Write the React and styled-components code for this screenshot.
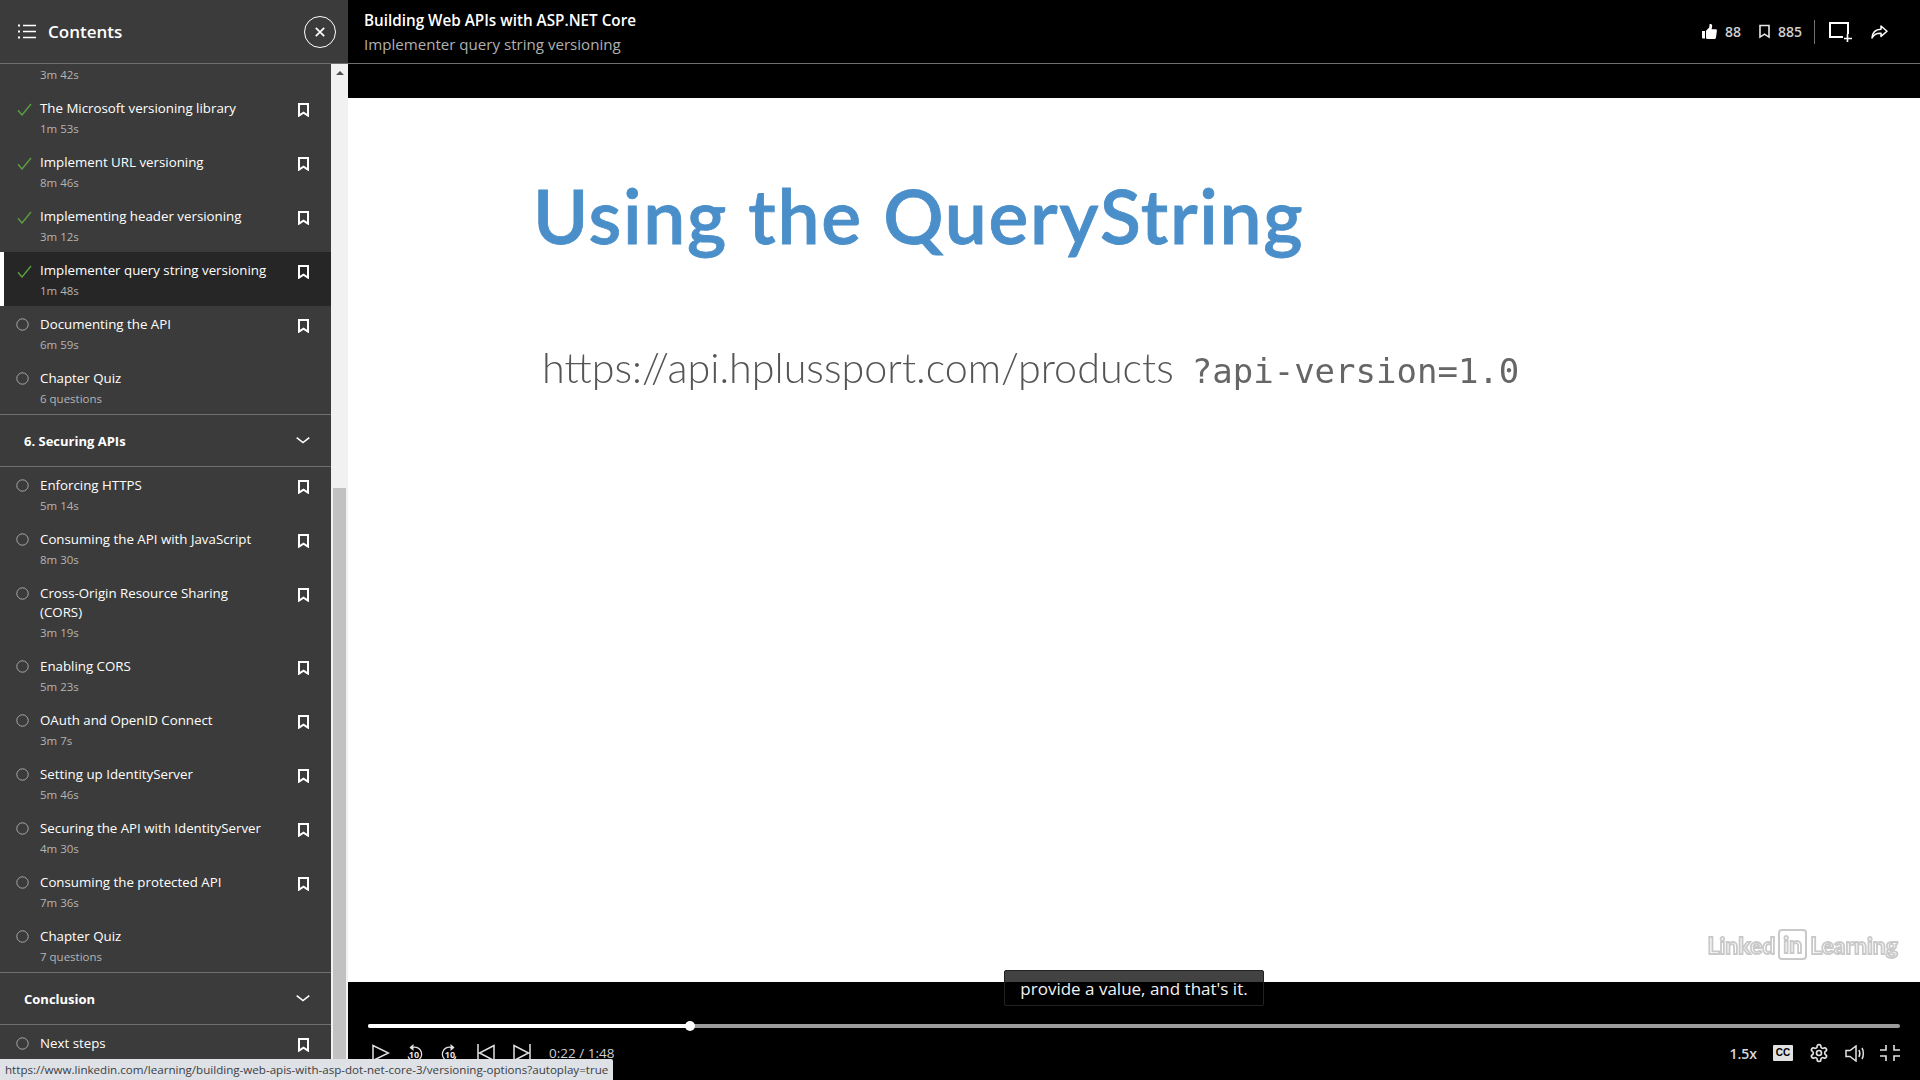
import React from 'react';
import styled, { createGlobalStyle } from 'styled-components';

const GlobalStyle = createGlobalStyle`
  html, body {
    margin: 0;
    padding: 0;
    height: 100%;
    overflow: hidden;
    background: #000;
    font-family: "Open Sans", "Noto Sans", "Liberation Sans", sans-serif;
  }
  * { box-sizing: border-box; }
`;

const topItems = [
  { title: 'The Microsoft versioning library', time: '1m 53s', done: true, mark: true },
  { title: 'Implement URL versioning', time: '8m 46s', done: true, mark: true },
  { title: 'Implementing header versioning', time: '3m 12s', done: true, mark: true },
  { title: 'Implementer query string versioning', time: '1m 48s', done: true, mark: true, active: true },
  { title: 'Documenting the API', time: '6m 59s', mark: true },
  { title: 'Chapter Quiz', time: '6 questions' },
];

const securingItems = [
  { title: 'Enforcing HTTPS', time: '5m 14s', mark: true },
  { title: 'Consuming the API with JavaScript', time: '8m 30s', mark: true },
  { title: 'Cross-Origin Resource Sharing (CORS)', time: '3m 19s', mark: true },
  { title: 'Enabling CORS', time: '5m 23s', mark: true },
  { title: 'OAuth and OpenID Connect', time: '3m 7s', mark: true },
  { title: 'Setting up IdentityServer', time: '5m 46s', mark: true },
  { title: 'Securing the API with IdentityServer', time: '4m 30s', mark: true },
  { title: 'Consuming the protected API', time: '7m 36s', mark: true },
  { title: 'Chapter Quiz', time: '7 questions' },
];

const BookmarkIcon = ({ w = 11, h = 14, color = '#fff', sw = 2 }) => (
  <svg width={w} height={h} viewBox="0 0 11 14" fill="none">
    <path d="M1 1h9v11.6L5.5 9.6 1 12.6z" stroke={color} strokeWidth={sw} />
  </svg>
);

const Chevron = () => (
  <svg width="14" height="7" viewBox="0 0 14 7" fill="none">
    <path d="M.7.7 7 5.6 13.3.7" stroke="#fff" strokeWidth="1.6" />
  </svg>
);

const StatusIcon = ({ done }) =>
  done ? (
    <svg width="15" height="13" viewBox="0 0 15 13" fill="none">
      <path d="M1 7.2 5 12 14 1" stroke="#5b9f40" strokeWidth="1.4" />
    </svg>
  ) : (
    <svg width="13" height="13" viewBox="0 0 13 13" fill="none">
      <circle cx="6.5" cy="6.5" r="5.7" stroke="#a8a8a8" strokeWidth="1" />
    </svg>
  );

function Lesson({ title, time, done, mark, active }) {
  return (
    <Row $active={active}>
      <StatusSlot $done={done}><StatusIcon done={done} /></StatusSlot>
      <RowText>
        <RowTitle>{title}</RowTitle>
        {time && <RowTime>{time}</RowTime>}
      </RowText>
      {mark && <MarkSlot><BookmarkIcon /></MarkSlot>}
    </Row>
  );
}

function Sidebar() {
  return (
    <Side>
      <SideHeader>
        <svg width="18" height="15" viewBox="0 0 18 15" fill="none">
          <path d="M5 1.5h13M5 7.5h13M5 13.5h13" stroke="#fff" strokeWidth="1.6" />
          <path d="M0 1.5h2M0 7.5h2M0 13.5h2" stroke="#fff" strokeWidth="2" />
        </svg>
        <SideTitle>Contents</SideTitle>
        <CloseButton>
          <svg width="10" height="10" viewBox="0 0 10 10" fill="none">
            <path d="M.8.8l8.4 8.4M9.2.8.8 9.2" stroke="#fff" strokeWidth="1.7" />
          </svg>
        </CloseButton>
      </SideHeader>
      <SideBody>
        <List>
          <ClippedTime>3m 42s</ClippedTime>
          {topItems.map((item) => <Lesson key={item.title} {...item} />)}
          <Section>6. Securing APIs<Chevron /></Section>
          {securingItems.map((item) => <Lesson key={item.title} {...item} />)}
          <Section>Conclusion<Chevron /></Section>
          <Lesson title="Next steps" mark />
        </List>
        <Scrollbar>
          <ScrollArrow />
          <ScrollThumb />
        </Scrollbar>
      </SideBody>
    </Side>
  );
}

function TopBar() {
  return (
    <Top>
      <TopTitles>
        <CourseTitle>Building Web APIs with ASP.NET Core</CourseTitle>
        <LessonTitle>Implementer query string versioning</LessonTitle>
      </TopTitles>
      <TopActions>
        <svg width="15" height="15" viewBox="0 0 15 15" fill="#fff">
          <path d="M0 7h3v7.5H1a1 1 0 0 1-1-1zM4 6.8 7.2 3.6 7.6 0h1.2c1 0 1.4 1 1.4 2L9.6 5.2h4c.9 0 1.4.7 1.3 1.5l-.9 6.8c-.1.8-.7 1.5-1.6 1.5H6.5C5.2 15 4 14.6 4 14.2z" />
        </svg>
        <Count>88</Count>
        <BookmarkSpacer><BookmarkIcon w={11} h={15} color="#e8e8e8" sw={1.6} /></BookmarkSpacer>
        <Count>885</Count>
        <Divider />
        <svg width="23" height="20" viewBox="0 0 23 20" fill="none">
          <path d="M14 15H1V1h18v11" stroke="#fff" strokeWidth="2" />
          <path d="M18.5 12v8M15 16.5h8" stroke="#fff" strokeWidth="1.6" />
        </svg>
        <ShareSpacer>
          <svg width="17" height="14" viewBox="0 0 17 14" fill="none">
            <path d="M10 1l6 5.2-6 5.2V8.2C6 8 3 9 1 13 1.300 7.500 5 4.400 10 4.200z" stroke="#fff" strokeWidth="1.5" strokeLinejoin="round" />
          </svg>
        </ShareSpacer>
      </TopActions>
    </Top>
  );
}

const ReplayIcon = ({ flip }) => (
  <ReplayWrap>
    <svg width="18" height="18" viewBox="0 0 18 18" fill="none">
      <g transform={flip ? 'translate(18 0) scale(-1 1)' : undefined}>
        <path d="M3 12.500A7 7 0 1 0 7.500 3.500H5.500" stroke="#e2e2e2" strokeWidth="1.300" />
        <path d="M8.500 0 4.500 3.500 8.500 7z" fill="#e2e2e2" />
      </g>
    </svg>
    <ReplayText>10</ReplayText>
  </ReplayWrap>
);

function Controls() {
  return (
    <Bottom>
      <Slider>
        <SliderFill />
        <SliderThumb />
      </Slider>
      <ControlRow>
        <ControlGroup>
          <PlayIcon width="18" height="18" viewBox="0 0 18 18" fill="none">
            <path d="M1 1.500v15L16.500 9z" stroke="#e2e2e2" strokeWidth="1.500" />
          </PlayIcon>
          <ReplayIcon />
          <ReplayIcon flip />
          <svg width="18" height="18" viewBox="0 0 18 18" fill="none">
            <path d="M1 0v18M17 1.500v15L2.500 9z" stroke="#e2e2e2" strokeWidth="1.500" />
          </svg>
          <svg width="18" height="18" viewBox="0 0 18 18" fill="none">
            <path d="M17 0v18M1 1.500v15L15.500 9z" stroke="#e2e2e2" strokeWidth="1.500" />
          </svg>
          <TimeText>0:22 / 1:48</TimeText>
        </ControlGroup>
        <ControlGroup $right>
          <Speed>1.5x</Speed>
          <CcBadge>CC</CcBadge>
          <svg width="20" height="20" viewBox="0 0 24 24" fill="none" stroke="#e2e2e2" strokeWidth="2">
            <path d="M12.220 2h-.440a2 2 0 0 0-2 2v.180a2 2 0 0 1-1 1.730l-.430.250a2 2 0 0 1-2 0l-.150-.080a2 2 0 0 0-2.730.730l-.220.380a2 2 0 0 0 .730 2.730l.150.100a2 2 0 0 1 1 1.720v.510a2 2 0 0 1-1 1.740l-.150.090a2 2 0 0 0-.730 2.730l.220.380a2 2 0 0 0 2.730.730l.150-.080a2 2 0 0 1 2 0l.430.250a2 2 0 0 1 1 1.730V20a2 2 0 0 0 2 2h.440a2 2 0 0 0 2-2v-.180a2 2 0 0 1 1-1.730l.430-.250a2 2 0 0 1 2 0l.150.080a2 2 0 0 0 2.730-.730l.220-.390a2 2 0 0 0-.730-2.730l-.150-.080a2 2 0 0 1-1-1.740v-.500a2 2 0 0 1 1-1.740l.150-.090a2 2 0 0 0 .730-2.730l-.220-.380a2 2 0 0 0-2.730-.730l-.150.080a2 2 0 0 1-2 0l-.430-.250a2 2 0 0 1-1-1.730V4a2 2 0 0 0-2-2z" />
            <circle cx="12" cy="12" r="3" />
          </svg>
          <svg width="21" height="17" viewBox="0 0 21 17" fill="none">
            <path d="M1 5.500h4L11 1v15L5 11.500H1z" stroke="#e2e2e2" strokeWidth="1.500" />
            <path d="M14 5c1 2 1 5 0 7M17 3c1.800 3 1.800 8 0 11" stroke="#e2e2e2" strokeWidth="1.500" />
          </svg>
          <ExitIcon width="20" height="16" viewBox="0 0 20 16" fill="none">
            <path d="M0 5h6V0M14 0v5h6M0 11h6v5M14 16v-5h6" stroke="#e2e2e2" strokeWidth="1.600" />
          </ExitIcon>
        </ControlGroup>
      </ControlRow>
    </Bottom>
  );
}

export default function App() {
  return (
    <>
      <GlobalStyle />
      <Page>
        <Sidebar />
        <Main>
          <TopBar />
          <Letterbox />
          <Video>
            <SlideHeading>Using the QueryString</SlideHeading>
            <SlideUrl>
              <UrlBase>https://api.hplussport.com/products</UrlBase>
              <UrlQuery>?api-version=1.0</UrlQuery>
            </SlideUrl>
            <Watermark>Linked<WatermarkBox>in</WatermarkBox>Learning</Watermark>
            <Caption>provide a value, and that's it.</Caption>
          </Video>
          <Controls />
        </Main>
        <StatusBar>https://www.linkedin.com/learning/building-web-apis-with-asp-dot-net-core-3/versioning-options?autoplay=true</StatusBar>
      </Page>
    </>
  );
}

const Page = styled.div`
  display: grid;
  grid-template-columns: 348px 1fr;
  width: 100vw;
  height: 100vh;
  overflow: hidden;
  position: relative;
`;

const Side = styled.aside`
  display: flex;
  flex-direction: column;
  height: 100%;
  min-height: 0;
  background: #3b3b3b;
  color: #fff;
`;

const SideHeader = styled.div`
  display: flex;
  align-items: center;
  height: 64px;
  flex: none;
  padding: 0 12px 0 18px;
  border-bottom: 1px solid #6f6f6f;
`;

const SideTitle = styled.div`
  flex: 1;
  margin-left: 12px;
  font-size: 17px;
  font-weight: 600;
`;

const CloseButton = styled.div`
  display: flex;
  align-items: center;
  justify-content: center;
  width: 32px;
  height: 32px;
  border: 1px solid #fff;
  border-radius: 50%;
`;

const SideBody = styled.div`
  display: flex;
  flex: 1;
  min-height: 0;
`;

const List = styled.div`
  width: 331px;
  flex: none;
  overflow: hidden;
`;

const ClippedTime = styled.div`
  height: 26px;
  padding: 1px 0 0 40px;
  font-size: 11.5px;
  line-height: 19px;
  color: #b4b4b4;
`;

const Row = styled.div`
  display: flex;
  align-items: flex-start;
  padding: 9px 0 6px ${(p) => (p.$active ? '12px' : '16px')};
  background: ${(p) => (p.$active ? '#262626' : 'transparent')};
  border-left: ${(p) => (p.$active ? '4px solid #fff' : 'none')};
`;

const StatusSlot = styled.div`
  display: flex;
  width: 24px;
  flex: none;
  padding: ${(p) => (p.$done ? '4px 0 0 1px' : '3px 0 0')};
`;

const RowText = styled.div`
  width: 228px;
  flex: none;
`;

const RowTitle = styled.div`
  font-size: 13.3px;
  line-height: 19px;
  color: #fff;
`;

const RowTime = styled.div`
  margin-top: 1px;
  font-size: 11.5px;
  line-height: 19px;
  color: #b4b4b4;
`;

const MarkSlot = styled.div`
  display: flex;
  margin-left: 30px;
  padding-top: 4px;
`;

const Section = styled.div`
  display: flex;
  align-items: center;
  justify-content: space-between;
  height: 53px;
  padding: 0 21px 0 24px;
  border-top: 1px solid #6f6f6f;
  border-bottom: 1px solid #6f6f6f;
  font-size: 13px;
  font-weight: 700;
  color: #fff;
`;

const Scrollbar = styled.div`
  display: flex;
  flex-direction: column;
  align-items: center;
  width: 17px;
  flex: none;
  background: #f1f1f1;
`;

const ScrollArrow = styled.div`
  width: 0;
  height: 0;
  margin-top: 7px;
  border-left: 4px solid transparent;
  border-right: 4px solid transparent;
  border-bottom: 4px solid #505050;
`;

const ScrollThumb = styled.div`
  width: 13px;
  flex: 1;
  margin-top: 413px;
  background: #c1c1c1;
`;

const Main = styled.main`
  display: flex;
  flex-direction: column;
  min-width: 0;
  height: 100%;
  background: #000;
`;

const Top = styled.header`
  display: flex;
  align-items: center;
  justify-content: space-between;
  height: 64px;
  flex: none;
  padding: 0 32px 0 16px;
  border-bottom: 1px solid #6f6f6f;
`;

const TopTitles = styled.div`
  display: flex;
  flex-direction: column;
  gap: 3px;
  padding-top: 2px;
`;

const CourseTitle = styled.div`
  font-size: 15.25px;
  line-height: 21px;
  font-weight: 600;
  color: #fff;
`;

const LessonTitle = styled.div`
  font-size: 15.1px;
  line-height: 21px;
  color: #b0b0b0;
`;

const TopActions = styled.div`
  display: flex;
  align-items: center;
`;

const Count = styled.span`
  margin-left: 8px;
  font-size: 14px;
  font-weight: 600;
  color: #d0d0d0;
`;

const BookmarkSpacer = styled.span`
  display: flex;
  margin-left: 18px;
`;

const Divider = styled.span`
  width: 1px;
  height: 24px;
  margin: 0 14px 0 12px;
  background: #6f6f6f;
`;

const ShareSpacer = styled.span`
  display: flex;
  margin-left: 19px;
`;

const Letterbox = styled.div`
  height: 34px;
  flex: none;
  background: #000;
`;

const Video = styled.section`
  position: relative;
  flex: 1;
  min-height: 0;
  padding: 74px 0 0 185px;
  background: #fff;
`;

const SlideHeading = styled.div`
  font-family: Lato, "Open Sans", sans-serif;
  font-size: 75px;
  line-height: 86px;
  font-weight: 600;
  letter-spacing: 1.7px;
  color: #4a8fc9;
  -webkit-text-stroke: 0.8px #4a8fc9;
  filter: blur(0.5px);
`;

const SlideUrl = styled.div`
  display: flex;
  align-items: baseline;
  gap: 18px;
  margin: 84px 0 0 9px;
  filter: blur(0.5px);
`;

const UrlBase = styled.span`
  font-family: Lato, "Open Sans", sans-serif;
  font-size: 41.3px;
  font-weight: 300;
  color: #555;
`;

const UrlQuery = styled.span`
  font-family: "DejaVu Sans Mono", monospace;
  font-size: 34px;
  color: #666;
`;

const Watermark = styled.div`
  position: absolute;
  right: 22px;
  top: 831px;
  display: flex;
  align-items: center;
  font-family: Lato, sans-serif;
  font-size: 23px;
  font-weight: 700;
  color: #fff;
  -webkit-text-stroke: 1.8px #c9c9c9;
  filter: blur(0.7px);
`;

const WatermarkBox = styled.span`
  margin: 0 3px;
  padding: 0 3px;
  line-height: 27px;
  border: 2px solid #c9c9c9;
  border-radius: 4px;
`;

const Caption = styled.div`
  position: absolute;
  left: 656px;
  bottom: -24px;
  display: flex;
  align-items: flex-end;
  justify-content: center;
  width: 260px;
  height: 36px;
  padding-bottom: 5px;
  background: rgba(0, 0, 0, 0.74);
  border: 1px solid #222;
  border-radius: 2px;
  font-size: 17px;
  line-height: 23px;
  color: #f2f2f2;
`;

const Bottom = styled.div`
  height: 98px;
  flex: none;
  padding: 42px 20px 0;
  background: #000;
`;

const Slider = styled.div`
  position: relative;
  height: 4px;
  background: #9c9c9c;
  border-radius: 2px;
`;

const SliderFill = styled.div`
  width: 322px;
  height: 100%;
  background: #fff;
  border-radius: 2px;
`;

const SliderThumb = styled.div`
  position: absolute;
  left: 317px;
  top: -3px;
  width: 10px;
  height: 10px;
  background: #fff;
  border-radius: 50%;
`;

const ControlRow = styled.div`
  display: flex;
  align-items: center;
  justify-content: space-between;
  margin-top: 15px;
  height: 20px;
`;

const ControlGroup = styled.div`
  display: flex;
  align-items: center;
  gap: ${(p) => (p.$right ? '16px' : '18px')};
  padding-left: ${(p) => (p.$right ? '0' : '4px')};
`;

const PlayIcon = styled.svg`
  margin-right: -3px;
`;

const ExitIcon = styled.svg`
  margin-left: -2px;
`;

const ReplayWrap = styled.span`
  position: relative;
  display: flex;
`;

const ReplayText = styled.span`
  position: absolute;
  inset: 5px 0 0;
  text-align: center;
  font-size: 9px;
  line-height: 11px;
  font-weight: 700;
  color: #e2e2e2;
`;

const TimeText = styled.span`
  font-size: 13.5px;
  color: #cfcfcf;
`;

const Speed = styled.span`
  font-size: 14px;
  font-weight: 600;
  color: #d8d8d8;
`;

const CcBadge = styled.span`
  width: 20px;
  height: 16px;
  background: #e2e2e2;
  border-radius: 1px;
  text-align: center;
  font-family: "Liberation Sans", sans-serif;
  font-size: 10px;
  line-height: 16px;
  font-weight: 700;
  color: #000;
`;

const StatusBar = styled.div`
  position: absolute;
  left: 0;
  bottom: 0;
  width: 613px;
  height: 21px;
  padding: 0 5px;
  background: #dee1e6;
  border-top-right-radius: 2px;
  font-size: 11.6px;
  line-height: 21px;
  white-space: nowrap;
  color: #3c4043;
`;
